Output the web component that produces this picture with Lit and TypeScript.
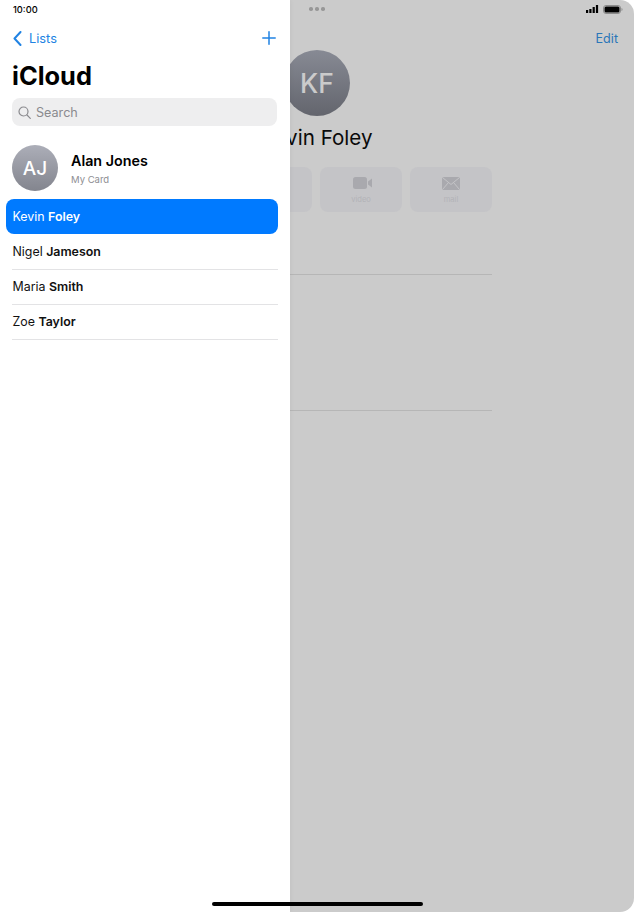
import { LitElement, html, css } from "lit";
import { customElement } from "lit/decorators.js";

const contacts = [
  { first: "Kevin", last: "Foley", selected: true },
  { first: "Nigel", last: "Jameson" },
  { first: "Maria", last: "Smith" },
  { first: "Zoe", last: "Taylor" },
];

@customElement("app-root")
export class AppRoot extends LitElement {
  static styles = css`
    :host {
      display: block;
      width: 634px;
      height: 912px;
      overflow: hidden;
      position: relative;
      background: #fff;
      font-family: Inter, "Liberation Sans", sans-serif;
      color: #000;
    }
    .detail {
      height: 912px;
      background: #cbcbcb;
      border-radius: 14px;
      display: flex;
      flex-direction: column;
      box-sizing: border-box;
    }
    .detail-status {
      height: 18px;
      display: flex;
      align-items: center;
      justify-content: flex-end;
      gap: 4px;
      padding-right: 11px;
      position: relative;
    }
    .dots {
      position: absolute;
      left: 309px;
      top: 7px;
      display: flex;
      gap: 2.5px;
    }
    .dots i {
      width: 3.5px;
      height: 3.5px;
      border-radius: 50%;
      background: #979797;
    }
    .edit-row {
      height: 32px;
      display: flex;
      justify-content: flex-end;
      align-items: center;
      padding-right: 16px;
      color: #2a76b8;
      font-size: 12.6px;
      box-sizing: border-box;
      padding-top: 8px;
    }
    .col {
      width: 350px;
      margin-left: 142px;
      display: flex;
      flex-direction: column;
      align-items: center;
    }
    .kf {
      width: 66px;
      height: 66px;
      border-radius: 50%;
      background: linear-gradient(#878a94, #63656d);
      color: #cbcbcb;
      font-size: 26.5px;
      font-weight: 500;
      display: flex;
      align-items: center;
      justify-content: center;
    }
    .kf-name {
      font-size: 20.6px;
      line-height: 28px;
      margin-top: 8px;
      color: #0a0a0a;
    }
    .actions {
      display: flex;
      gap: 8px;
      margin-top: 15px;
      width: 100%;
      justify-content: flex-end;
    }
    .action {
      width: 82px;
      height: 45px;
      border-radius: 8px;
      background: #c4c4c7;
      display: flex;
      flex-direction: column;
      align-items: center;
      color: #b3b3b7;
      font-size: 7.6px;
      line-height: 10px;
      padding-top: 10px;
      box-sizing: border-box;
      gap: 6px;
    }
    .mail-icon {
      margin-bottom: -1px;
    }
    .rule {
      align-self: stretch;
      height: 1px;
      background: #b6b6b6;
    }
    .rule.first { margin-top: 62px; }
    .rule.second { margin-top: 135px; }

    .sidebar {
      position: absolute;
      left: 0;
      top: 0;
      bottom: 0;
      width: 290px;
      background: #fff;
      box-shadow: 0 0 5px rgba(0, 0, 0, 0.06);
      display: flex;
      flex-direction: column;
    }
    .time {
      height: 18px;
      padding-left: 13px;
      font-size: 9.3px;
      font-weight: 500;
      line-height: 20px;
    }
    .nav {
      height: 40px;
      display: flex;
      align-items: center;
      justify-content: space-between;
      padding: 0 14px 0 13px;
      color: #2183e3;
      font-size: 12.8px;
    }
    .back {
      display: flex;
      align-items: center;
      gap: 7px;
    }
    h1 {
      margin: 0;
      font-size: 25.4px;
      line-height: 32px;
      font-weight: 700;
      padding: 2px 0 0 12px;
      height: 30px;
      letter-spacing: 0;
    }
    .search {
      margin: 8px 13px 0 12px;
      height: 28px;
      border-radius: 8px;
      background: #eeeeef;
      display: flex;
      align-items: center;
      gap: 5px;
      padding-left: 6px;
      color: #8a8a8e;
      font-size: 12.6px;
    }
    .me {
      display: flex;
      align-items: center;
      gap: 13px;
      padding: 19px 12px 0;
      height: 46px;
    }
    .aj {
      width: 46px;
      height: 46px;
      border-radius: 50%;
      background: linear-gradient(#acaeb8, #83858e);
      color: #fff;
      font-size: 19px;
      font-weight: 500;
      display: flex;
      align-items: center;
      justify-content: center;
      flex: none;
    }
    .me-name {
      font-size: 14.3px;
      font-weight: 600;
      line-height: 20px;
      margin-top: 1px;
    }
    .me-sub {
      font-size: 9.5px;
      color: #8e8e93;
      line-height: 14px;
      margin-top: 2px;
    }
    .list {
      margin-top: 8px;
      display: flex;
      flex-direction: column;
    }
    .item {
      height: 35px;
      margin: 0 12px;
      padding: 0 0 1px 0.5px;
      box-sizing: border-box;
      display: flex;
      align-items: center;
      font-size: 12.4px;
      gap: 0.28em;
      border-bottom: 1px solid #e3e3e5;
      color: #111;
    }
    .item b { font-weight: 600; }
    .item.selected {
      margin: 0 12px 1px 6px;
      padding-left: 6.5px;
      background: #007aff;
      color: #fff;
      border-radius: 8px;
      border-bottom: none;
    }
    .home {
      position: absolute;
      left: 212px;
      top: 902px;
      width: 211px;
      height: 4px;
      border-radius: 2px;
      background: #000;
    }
  `;

  render() {
    return html`
      <div class="detail">
        <div class="detail-status">
          <div class="dots"><i></i><i></i><i></i></div>
          <svg width="13" height="8" viewBox="0 0 13 8" fill="#000">
            <rect x="0" y="5" width="2.200" height="3" />
            <rect x="3.300" y="4" width="2.200" height="4" />
            <rect x="6.600" y="2" width="2.200" height="6" />
            <rect x="9.900" y="0" width="2.200" height="8" />
          </svg>
          <svg width="20" height="9" viewBox="0 0 20 9">
            <rect x="0.500" y="0.500" width="17" height="8" rx="2.500" fill="none" stroke="#8a8a8a" />
            <rect x="1.500" y="1.500" width="15" height="6" rx="1.500" fill="#000" />
            <path d="M18.500 3v3c.7-.2 1-.8 1-1.500s-.3-1.300-1-1.500z" fill="#8a8a8a" />
          </svg>
        </div>
        <div class="edit-row">Edit</div>
        <div class="col">
          <div class="kf">KF</div>
          <div class="kf-name">Kevin Foley</div>
          <div class="actions">
            <div class="action"></div>
            <div class="action">
              <svg width="23" height="12" viewBox="0 0 23 12" fill="#a9a9ae">
                <rect x="3" y="0" width="14" height="12" rx="2.500" />
                <path d="M18 4.500 22 1.500v9l-4-3z" />
              </svg>
              <span>video</span>
            </div>
            <div class="action">
              <svg class="mail-icon" width="18" height="13" viewBox="0 0 18 13">
                <rect width="18" height="13" rx="1.500" fill="#a9a9ae" />
                <path d="M0.500 0.500 9 7.500l8.500-7M0.500 12.500 6.500 5.500M17.500 12.500 11.500 5.500" fill="none" stroke="#c4c4c7" stroke-width="1" />
              </svg>
              <span>mail</span>
            </div>
          </div>
          <div class="rule first"></div>
          <div class="rule second"></div>
        </div>
      </div>

      <aside class="sidebar">
        <div class="time">10:00</div>
        <div class="nav">
          <div class="back">
            <svg width="9" height="15" viewBox="0 0 9 15" fill="none" stroke="#2183e3" stroke-width="2" stroke-linecap="round" stroke-linejoin="round">
              <path d="M7.500 1 1.500 7.500 7.500 14" />
            </svg>
            <span>Lists</span>
          </div>
          <svg width="14" height="14" viewBox="0 0 14 14" stroke="#2183e3" stroke-width="1.500" stroke-linecap="round">
            <path d="M7 .8v12.400M.8 7h12.400" />
          </svg>
        </div>
        <h1>iCloud</h1>
        <div class="search">
          <svg width="13" height="13" viewBox="0 0 13 13" fill="none" stroke="#8a8a8e" stroke-width="1.200" stroke-linecap="round">
            <circle cx="5.500" cy="5.500" r="4.500" />
            <path d="M9 9l3.300 3.300" />
          </svg>
          <span>Search</span>
        </div>
        <div class="me">
          <div class="aj">AJ</div>
          <div>
            <div class="me-name">Alan Jones</div>
            <div class="me-sub">My Card</div>
          </div>
        </div>
        <div class="list">
          ${contacts.map(
            (c) => html`<div class="item ${c.selected ? "selected" : ""}">
              <span>${c.first}</span><b>${c.last}</b>
            </div>`
          )}
        </div>
      </aside>
      <div class="home"></div>
    `;
  }
}
